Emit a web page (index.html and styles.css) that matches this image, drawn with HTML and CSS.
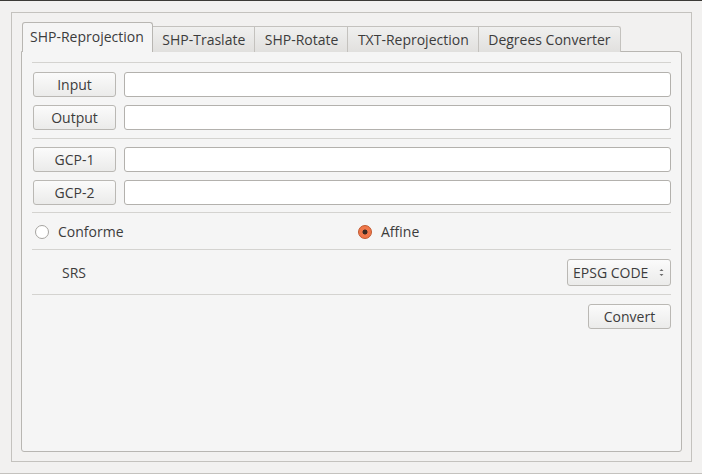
FILE: index.html
```html
<!DOCTYPE html>
<html>
<head>
<meta charset="utf-8">
<link rel="stylesheet" href="styles.css">
</head>
<body>
<div class="topline"></div>
<div class="window">
  <div class="frame">
    <div class="tabbar">
      <div class="tab active">SHP-Reprojection</div>
      <div class="tab">SHP-Traslate</div>
      <div class="tab">SHP-Rotate</div>
      <div class="tab">TXT-Reprojection</div>
      <div class="tab">Degrees Converter</div>
    </div>
    <div class="pane">
      <div class="sep"></div>
      <div class="row r-first"><div class="btn">Input</div><div class="field"></div></div>
      <div class="row"><div class="btn">Output</div><div class="field"></div></div>
      <div class="sep s-mid"></div>
      <div class="row"><div class="btn">GCP-1</div><div class="field"></div></div>
      <div class="row"><div class="btn">GCP-2</div><div class="field"></div></div>
      <div class="sep s-mid2"></div>
      <div class="radios">
        <div class="radio-item first"><span class="radio"></span><span>Conforme</span></div>
        <div class="radio-item second"><span class="radio checked"></span><span>Affine</span></div>
      </div>
      <div class="sep"></div>
      <div class="srs-row">
        <span class="srs-label">SRS</span>
        <div class="combo"><span>EPSG CODE</span>
          <svg class="spin" width="7" height="11" viewBox="0 0 7 11"><path d="M1.5 4 L3.5 2 L5.5 4 Z" fill="#6a6a6a"/><path d="M1.5 7 L3.5 9 L5.5 7 Z" fill="#6a6a6a"/></svg>
        </div>
      </div>
      <div class="sep"></div>
      <div class="convert-row"><div class="btn convert">Convert</div></div>
    </div>
  </div>
</div>
<div class="bottomline"></div>
</body>
</html>
```
FILE: styles.css
```css
* { box-sizing: border-box; }
html, body { margin: 0; padding: 0; }
body {
  width: 702px;
  height: 474px;
  background: #f2f1f0;
  font-family: "Open Sans", "DejaVu Sans", sans-serif;
  font-size: 14px;
  color: #3c3c3c;
  overflow: hidden;
}
.topline { height: 1px; background: #3c3b37; }
.bottomline { height: 1px; background: #c4c2be; }
.window {
  height: 472px;
  padding: 11px 10px 11px 11px;
}
.frame {
  width: 681px;
  height: 450px;
  border: 1px solid #c4c2be;
  padding: 9px 9px 9px 9px;
  display: flex;
  flex-direction: column;
}
.tabbar {
  display: flex;
  align-items: flex-end;
  height: 30px;
  padding-left: 1px;
  position: relative;
  z-index: 1;
  margin-bottom: -1px;
}
.tab {
  height: 26px;
  padding: 0 9px 1px 9.5px;
  display: flex;
  align-items: center;
  border: 1px solid #c4c2be;
  border-left: none;
  border-bottom: none;
  background: linear-gradient(#f0f0ef, #e1e0de);
  white-space: nowrap;
}
.tab.active {
  height: 30px;
  border-left: 1px solid #b8b6b2;
  border-color: #b8b6b2;
  border-radius: 3px 3px 0 0;
  background: #f5f5f5;
  padding: 0 8px 2px 7px;
}
.tab:last-child { border-radius: 0 3px 0 0; }
.pane {
  flex: 1;
  background: #f5f5f5;
  border: 1px solid #b8b6b2;
  border-radius: 0 3px 3px 3px;
  padding: 10px 10px 0 10px;
  display: flex;
  flex-direction: column;
}
.sep {
  height: 1px;
  background: #d4d3d0;
  flex: none;
}
.row {
  display: flex;
  gap: 8px;
  height: 25px;
  margin-top: 8px;
  margin-left: 1px;
  flex: none;
}
.row.r-first { margin-top: 9px; }
.s-mid { margin-top: 8px; }
.s-mid2 { margin-top: 7px; }
.btn {
  width: 83px;
  height: 25px;
  border: 1px solid #bab8b4;
  border-radius: 3px;
  background: linear-gradient(#fbfbfb, #ebebea);
  display: flex;
  align-items: center;
  justify-content: center;
  flex: none;
}
.field {
  flex: 1;
  height: 25px;
  background: #ffffff;
  border: 1px solid #b3b1ad;
  border-radius: 3px;
}
.radios {
  height: 36px;
  display: flex;
  align-items: center;
  flex: none;
  padding-top: 1px;
}
.radio-item {
  display: flex;
  align-items: center;
  gap: 9px;
}
.radio-item.first { padding-left: 3px; width: 326px; }
.radio {
  width: 14px;
  height: 14px;
  border-radius: 50%;
  border: 1px solid #a6a4a0;
  background: #ffffff;
  display: inline-block;
  flex: none;
}
.radio.checked {
  border-color: #c0552a;
  background: radial-gradient(circle, #3c2a22 0 2.2px, #f0774a 2.8px);
}
.srs-row {
  height: 44px;
  display: flex;
  align-items: center;
  justify-content: space-between;
  flex: none;
}
.srs-label { padding-left: 30px; }
.combo {
  width: 104px;
  height: 27px;
  border: 1px solid #bab8b4;
  border-radius: 3px;
  background: linear-gradient(#fbfbfb, #ebebea);
  display: flex;
  align-items: center;
  justify-content: space-between;
  padding: 0 5px 0 5px;
}
.spin { flex: none; }
.convert-row {
  display: flex;
  justify-content: flex-end;
  margin-top: 9px;
}
.btn.convert { width: 83px; }
```
